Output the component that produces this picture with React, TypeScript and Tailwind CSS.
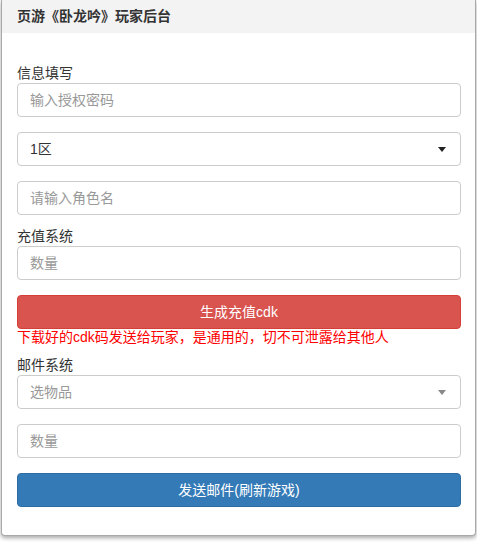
import { useState } from 'react';

const font = { fontFamily: '"Liberation Sans", "Noto Sans CJK SC", sans-serif' };

function Field({ placeholder }: { placeholder: string }) {
    return (
        <input
            placeholder={placeholder}
            className="block h-[34px] w-[444px] rounded-[4px] border border-[#ccc] bg-white px-3 text-[14px] text-[#555] placeholder:text-[#999] outline-none"
        />
    );
}

function Picker({ value, muted }: { value: string; muted?: boolean }) {
    return (
        <div className="relative flex h-[34px] w-[444px] items-center rounded-[4px] border border-[#ccc] bg-white px-3 text-[14px]">
            <span className={muted ? 'text-[#999]' : 'text-[#333]'}>{value}</span>
            <span
                className={`absolute right-[14px] top-[14px] h-0 w-0 border-x-[4px] border-t-[5px] border-x-transparent ${muted ? 'border-t-[#888]' : 'border-t-[#222]'}`}
            />
        </div>
    );
}

export default function App() {
    const [zone] = useState('1区');

    return (
        <div className="h-[542px] w-[477px] bg-white" style={font}>
            <div className="ml-[1px] w-[475px] rounded-b-[4px] border-x border-b border-[#a8a8a8] bg-white shadow-[0_2px_4px_rgba(0,0,0,0.35)]">
                <div className="flex h-[33px] items-center bg-[#f3f3f3] px-[15px] text-[14px] font-bold text-[#333]">
                    页游《卧龙吟》玩家后台
                </div>

                <div className="px-[15px] pb-[28px] pt-[31px] text-[14px] text-[#333]">
                    <div className="leading-[19px]">信息填写</div>
                    <Field placeholder="输入授权密码" />
                    <div className="mt-[15px]">
                        <Picker value={zone} />
                    </div>
                    <div className="mt-[15px]">
                        <Field placeholder="请输入角色名" />
                    </div>

                    <div className="mt-[12px] leading-[19px]">充值系统</div>
                    <Field placeholder="数量" />
                    <button className="mt-[15px] block h-[34px] w-[444px] rounded-[4px] border border-[#d43f3a] bg-[#d9534f] text-[14px] text-white">
                        生成充值cdk
                    </button>
                    <div className="leading-[16px] text-[#ff0000]">下载好的cdk码发送给玩家，是通用的，切不可泄露给其他人</div>

                    <div className="mt-[11px] leading-[19px]">邮件系统</div>
                    <Picker value="选物品" muted />
                    <div className="mt-[15px]">
                        <Field placeholder="数量" />
                    </div>
                    <button className="mt-[15px] block h-[34px] w-[444px] rounded-[4px] border border-[#2e6da4] bg-[#337ab7] text-[14px] text-white">
                        发送邮件(刷新游戏)
                    </button>
                </div>
            </div>
        </div>
    );
}
